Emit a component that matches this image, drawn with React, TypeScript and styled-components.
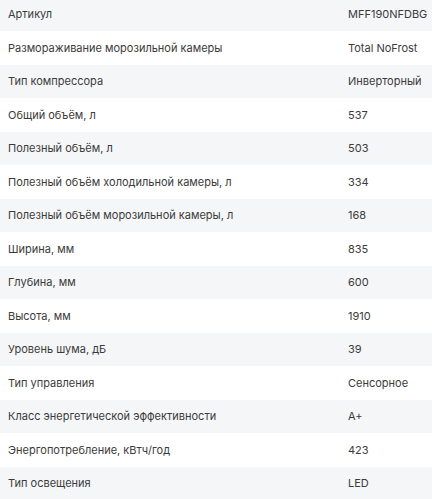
import styled, { createGlobalStyle } from 'styled-components';

const GlobalStyle = createGlobalStyle`
  html, body {
    margin: 0;
    padding: 0;
    background: #ffffff;
  }
  body {
    font-family: Inter, "Noto Sans", sans-serif;
    overflow: hidden;
  }
`;

const SpecsTable = styled.div`
  display: flex;
  flex-direction: column;
  margin-top: -2.5px;
`;

const SpecRow = styled.div<{ $shaded: boolean }>`
  display: grid;
  grid-template-columns: 340px 1fr;
  align-items: center;
  height: 33.5px;
  padding: 0 8px;
  background: ${p => (p.$shaded ? '#f5f6f8' : '#ffffff')};
`;

const SpecLabel = styled.div`
  font-size: 11px;
  color: #3b3b3b;
  white-space: nowrap;
`;

const SpecValue = styled.div`
  font-size: 11px;
  color: #3b3b3b;
  white-space: nowrap;
`;

const specs: [string, string][] = [
  ['Артикул', 'MFF190NFDBG'],
  ['Размораживание морозильной камеры', 'Total NoFrost'],
  ['Тип компрессора', 'Инверторный'],
  ['Общий объём, л', '537'],
  ['Полезный объём, л', '503'],
  ['Полезный объём холодильной камеры, л', '334'],
  ['Полезный объём морозильной камеры, л', '168'],
  ['Ширина, мм', '835'],
  ['Глубина, мм', '600'],
  ['Высота, мм', '1910'],
  ['Уровень шума, дБ', '39'],
  ['Тип управления', 'Сенсорное'],
  ['Класс энергетической эффективности', 'A+'],
  ['Энергопотребление, кВтч/год', '423'],
  ['Тип освещения', 'LED'],
];

const App = () => {
  return (
    <>
      <GlobalStyle />
      <SpecsTable>
        {specs.map(([label, value], i) => (
          <SpecRow key={label} $shaded={i % 2 === 0}>
            <SpecLabel>{label}</SpecLabel>
            <SpecValue>{value}</SpecValue>
          </SpecRow>
        ))}
      </SpecsTable>
    </>
  );
};

export default App;
